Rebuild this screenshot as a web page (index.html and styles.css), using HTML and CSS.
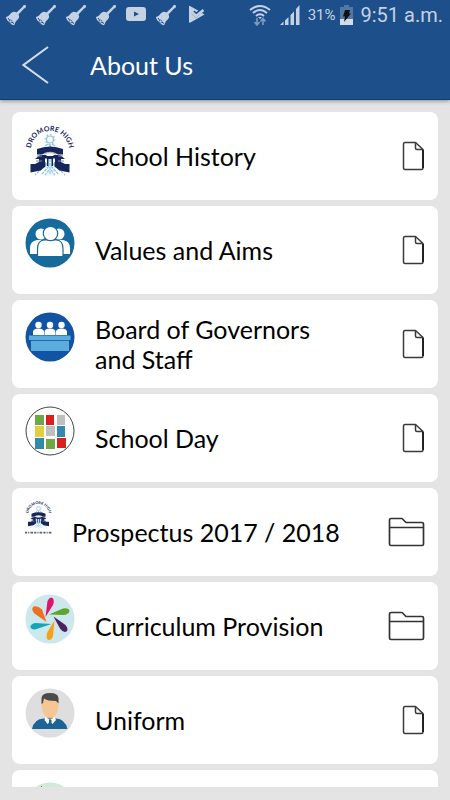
FILE: index.html
```html
<!DOCTYPE html>
<html lang="en">
<head>
    <meta charset="UTF-8">
    <meta name="viewport" content="width=device-width, initial-scale=1.0">
    <title>About Us</title>
    <link rel="stylesheet" href="styles.css">
</head>
<body>
    <!-- Shared icons -->
    <svg class="sprites" aria-hidden="true">
        <symbol id="bell" viewBox="0 0 22 22">
            <g fill="#c5d2e3">
                <path d="M11 9 19 1.500 20.500 3 13 11z"/>
                <path d="M17.500 2 20 .8 21.200 2 20 4.500z"/>
                <path d="M1 13C5 12 5 9 8 8 11 7 15 11 14 13.500 13 16 11 16 9.500 20.500Q8.500 22 6 20 1 16 1 13z"/>
            </g>
            <path d="M3 14Q5 18 9 19.500" fill="none" stroke="#1d4f8b" stroke-width="1"/>
            <circle cx="5.500" cy="17.500" r="1.500" fill="#c5d2e3" stroke="#1d4f8b" stroke-width=".7"/>
        </symbol>
        <symbol id="crest" viewBox="0 0 50 52">
            <path d="M20 34h10v18H20z" fill="#edf7fd"/>
            <g fill="none" stroke="#8cc4e6">
                <circle cx="25" cy="15.500" r="3.500" stroke-width="1.200"/>
                <circle cx="25" cy="15.500" r="4.800" stroke-width="1.200" stroke-dasharray="1.500 2.200"/>
                <path d="M25 20v5M20 22l3-2M30 22l-3-2M19 24h12" stroke-width="1.500"/>
                <path d="M25 35v16M23 39 10 51M27 39 40 51M24 42l-8 9M26 42l8 9M24 46l-4 5M26 46l4 5" stroke-width="1.200" stroke-dasharray="3 1"/>
            </g>
            <g fill="#16265a">
                <path d="M12 25Q25 20 38 25V30.500H33Q25 26 17 30.500H12z"/>
                <path d="M15 31h7l-2 2v7H10l4-2v-3h-4zM35 31h-7l2 2v7h10l-4-2v-3h4z"/>
                <path d="M20 32h10v2.500H28V42h-1.500v-7h-3v7H22v-7.500h-2z"/>
                <path d="M5.500 40h11l4-2v4.500l-5 4-10 2zM44.500 40H33.500l-4-2v4.500l5 4 10 2z"/>
            </g>
            <path d="M12 32h5M33 32h5M11 37h6M33 37h6" stroke="#8290ad" stroke-width="1"/>
            <path d="M19 30Q25 27 31 30" fill="none" stroke="#b4bccb" stroke-width="1.500"/>
        </symbol>
        <symbol id="page" viewBox="0 0 23 30">
            <g fill="none" stroke="#3a3a3a" stroke-width="1.500" stroke-linejoin="round">
                <path d="M3 1.500H13.500L21 8.500V27Q21 28.500 19.500 28.500H3Q1.500 28.500 1.500 27V3Q1.500 1.500 3 1.500z"/>
                <path d="M13.500 1.500V7Q13.500 8.500 15 8.500H21"/>
            </g>
            <path d="M21 9V27" stroke="#222" stroke-width="2"/>
        </symbol>
        <symbol id="folder" viewBox="0 0 37 30">
            <path d="M3 1.500H14L18 5.500H34Q35.500 5.500 35.500 7V27Q35.500 28.500 34 28.500H3Q1.500 28.500 1.500 27V3Q1.500 1.500 3 1.500zM1.500 10.500H35.500" fill="none" stroke="#333" stroke-width="1.700" stroke-linejoin="round"/>
        </symbol>
    </svg>

    <header class="app-header">
        <div class="status-bar">
            <div class="notifications">
                <svg class="notice"><use href="#bell"/></svg>
                <svg class="notice"><use href="#bell"/></svg>
                <svg class="notice"><use href="#bell"/></svg>
                <svg class="notice"><use href="#bell"/></svg>
                <svg class="notice" viewBox="0 0 22 22">
                    <rect x="1" y="3" width="20" height="14" rx="3" fill="#c5d2e3"/>
                    <path d="M9 7.500v5l5-2.500z" fill="#1d4f8b"/>
                </svg>
                <svg class="notice"><use href="#bell"/></svg>
                <svg class="notice" viewBox="0 0 22 22">
                    <path d="M4 2.500Q4 1.500 5 2L14 7 19.500 10.500 5.500 18.500Q4 19 4 18z" fill="#c5d2e3"/>
                    <path d="M8 8 11 11 20 3.500" fill="none" stroke="#1d4f8b" stroke-width="4"/>
                    <path d="M7 8 11 12 18.500 6" fill="none" stroke="#c5d2e3" stroke-width="2.500"/>
                </svg>
            </div>
            <div class="device">
                <svg class="wifi" viewBox="0 0 22 24">
                    <g fill="none" stroke="#c5d2e3" stroke-width="2">
                        <path d="M1 7Q11-1 21 7M4 10Q11 4 18 10M7 13Q11 9.500 15 13"/>
                    </g>
                    <path d="M9 14h4l-2 2z" fill="#c5d2e3"/>
                    <path d="M8 15v7M5.500 19 8 22l2.500-3M14 22v-6M11.500 18.500 14 15.500l2.500 3" fill="none" stroke="#7f9cc0" stroke-width="1.600"/>
                </svg>
                <svg class="signal" viewBox="0 0 22 22">
                    <path d="M1 21 4.500 17.500V21zM6 16.500 9.500 13V21H6zM11.500 11 15 7.500V21h-3.500zM17 5 20.500 1V21H17z" fill="#c5d2e3"/>
                </svg>
                <span class="charge">31%</span>
                <svg class="battery" viewBox="0 0 13 20">
                    <path d="M4 0h5v2h4v18H0V2h4z" fill="#5078a8"/>
                    <path d="M0 14h13v6H0z" fill="#d3dce8"/>
                    <path d="M5 5h5L9 8.500h2L4 17l1-5.500H3z" fill="#111"/>
                </svg>
                <span class="clock">9:51 a.m.</span>
            </div>
        </div>
        <div class="title-bar">
            <button class="back" type="button" aria-label="Back">
                <svg viewBox="0 0 28 40"><path d="M26 2 1.500 20 26 38" fill="none" stroke="#d5dfeb" stroke-width="2"/></svg>
            </button>
            <h1>About Us</h1>
        </div>
    </header>

    <main class="menu">
        <a class="card" href="#history">
            <svg class="picture" viewBox="0 0 50 50">
                <use href="#crest" width="50" height="52"/>
                <path id="arc" d="M6 26A19 19 0 0 1 44 26" fill="none"/>
                <text class="crest-name" text-anchor="middle"><textPath href="#arc" startOffset="50%">DROMORE HIGH</textPath></text>
            </svg>
            <span class="label">School History</span>
            <svg class="page"><use href="#page"/></svg>
        </a>
        <a class="card" href="#values">
            <svg class="picture" viewBox="0 0 50 50">
                <circle cx="25" cy="25" r="24.500" fill="#176b9c"/>
                <g fill="#fff">
                    <circle cx="16" cy="16" r="5.500"/>
                    <circle cx="34" cy="16" r="5.500"/>
                    <path d="M5 36V30Q5 23 12 22H38Q45 23 45 30V36z"/>
                </g>
                <g fill="#fff" stroke="#176b9c" stroke-width="1.200">
                    <path d="M12.500 38.500V31Q12.500 22 20 22H31Q38 22 38 31V38.500z"/>
                    <circle cx="25.500" cy="15.500" r="7.200"/>
                </g>
            </svg>
            <span class="label">Values and Aims</span>
            <svg class="page"><use href="#page"/></svg>
        </a>
        <a class="card" href="#governors">
            <svg class="picture" viewBox="0 0 50 50">
                <circle cx="25" cy="25" r="24.500" fill="#1254a3"/>
                <g fill="#fff">
                    <circle cx="13.500" cy="13" r="3.200"/>
                    <circle cx="25" cy="13" r="3.200"/>
                    <circle cx="36.500" cy="13" r="3.200"/>
                    <path d="M8 23V20Q8 16.500 13.500 16.500T19 20V23zM19.500 23V20Q19.500 16.500 25 16.500T30.500 20V23zM31 23V20Q31 16.500 36.500 16.500T42 20V23z"/>
                </g>
                <path d="M4 23.500H45.500V28H4zM6 28.800H44V39H6z" fill="#5badde"/>
            </svg>
            <span class="label">Board of Governors and Staff</span>
            <svg class="page"><use href="#page"/></svg>
        </a>
        <a class="card" href="#day">
            <svg class="picture" viewBox="0 0 50 50">
                <circle cx="25" cy="25" r="24" fill="#fff" stroke="#444"/>
                <path d="M10 9h9v10h-9zM21 33h9v10h-9z" fill="#6fa744"/>
                <path d="M21 9h8v10h-8zM32 32h9v10h-9z" fill="#d9201f"/>
                <path d="M32 9h8v10h-8zM21 20h9v10h-9z" fill="#bfbfbf"/>
                <path d="M10 20h9v11h-9z" fill="#e2cf3e"/>
                <path d="M32 20h8v11h-8zM10 32h9v11h-9z" fill="#318aaa"/>
            </svg>
            <span class="label">School Day</span>
            <svg class="page"><use href="#page"/></svg>
        </a>
        <a class="card" href="#prospectus">
            <svg class="picture small" viewBox="0 0 50 66">
                <use href="#crest" width="50" height="52"/>
                <text class="crest-name" text-anchor="middle"><textPath href="#arc" startOffset="50%">DROMORE HIGH</textPath></text>
                <path d="M0 60H50" stroke="#58637f" stroke-width="3" stroke-dasharray="4 2 2 2 5 2"/>
            </svg>
            <span class="label wide">Prospectus 2017 / 2018</span>
            <svg class="folder"><use href="#folder"/></svg>
        </a>
        <a class="card" href="#curriculum">
            <svg class="picture" viewBox="0 0 50 50">
                <circle cx="25" cy="25" r="24.500" fill="#cce8ec"/>
                <path d="M20.500 23 22.500 7Q25 1.500 28 4.500 29.500 7 28 11z" fill="#db146f"/>
                <path d="M24 20.500 38 14.500Q44 13.500 44.500 17 44 20 39 21z" fill="#5ca52e"/>
                <path d="M28.500 22.500 40.500 31Q44 35.500 41.500 37.500 38 39 35 34.500z" fill="#4c2161"/>
                <path d="M29.500 26.500 28 42Q26 47.500 22.500 45.500 20.500 43 22.500 38z" fill="#f6a01b"/>
                <path d="M26.500 30 10 29Q5 30 5.500 33.500 7.500 37 13 34.500z" fill="#18a4b4"/>
                <path d="M21.500 28 17 15.500Q13 11.500 8.500 12.500 5.500 15 9.500 19.500z" fill="#ed7022"/>
            </svg>
            <span class="label">Curriculum Provision</span>
            <svg class="folder"><use href="#folder"/></svg>
        </a>
        <a class="card" href="#uniform">
            <svg class="picture" viewBox="0 0 50 50">
                <circle cx="25" cy="25" r="24.500" fill="#dedede"/>
                <path d="M22 25h6.500v7H22z" fill="#e8b885"/>
                <path d="M7 41Q9 31 19 30.500H31Q40 31 42.500 41z" fill="#1b6496"/>
                <path d="M20.500 29 25 32 29.500 29 31 32 27.500 36 25 33.500 22.500 36 19.500 32z" fill="#fff"/>
                <path d="M24 32h2.500v4H24z" fill="#1b6496"/>
                <path d="M17 10H33.500V18Q33 27 28 29H22Q17.500 27 16.500 18z" fill="#f6c795"/>
                <path d="M16.500 16V10Q17 5 25 5T33.500 10V15.500L31 13Q22 13 19 10.500L18 15z" fill="#4b4b4a"/>
            </svg>
            <span class="label">Uniform</span>
            <svg class="page"><use href="#page"/></svg>
        </a>
        <a class="card" href="#more" aria-label="More">
            <svg class="picture" viewBox="0 0 50 50">
                <circle cx="25" cy="25" r="24.500" fill="#d3e9d8"/>
                <path d="M16 4 20 8" stroke="#777" stroke-width="1"/>
            </svg>
        </a>
    </main>
</body>
</html>
```

FILE: styles.css
```css
* {
    margin: 0;
    padding: 0;
    box-sizing: border-box;
}
body {
    display: flex;
    flex-direction: column;
    height: 100vh;
    padding-bottom: 13px;
    background-color: #e4e4e4;
    font-family: Lato, sans-serif;
}
.sprites {
    display: none;
}
.app-header {
    flex: none;
    background-color: #1d4f8b;
    border-bottom: 1px solid #0b3c7c;
    box-shadow: 0 1px 4px rgba(0,0,0,0.4);
    color: white;
    z-index: 1;
}
.status-bar {
    display: flex;
    justify-content: space-between;
    align-items: center;
    height: 30px;
    padding: 0 7px 0 5px;
    font-family: Roboto, sans-serif;
    color: #c5d2e3;
}
.notifications {
    display: flex;
    gap: 8px;
}
.notice {
    width: 22px;
    height: 22px;
}
.device {
    display: flex;
    align-items: center;
}
.wifi {
    width: 22px;
    height: 24px;
    margin-right: 8px;
}
.signal {
    width: 22px;
    height: 22px;
    margin-right: 7px;
}
.charge {
    font-size: 15px;
    margin-right: 4px;
}
.battery {
    width: 13px;
    height: 20px;
    margin-right: 8px;
}
.clock {
    font-size: 20px;
}
.title-bar {
    display: flex;
    align-items: center;
    gap: 40px;
    height: 69px;
    padding: 0 22px;
}
.back {
    width: 28px;
    height: 40px;
    background: none;
    border: none;
    cursor: pointer;
}
.back svg {
    display: block;
}
h1 {
    font-size: 25px;
    font-weight: normal;
    line-height: 30px;
}
.menu {
    flex: 1;
    display: flex;
    flex-direction: column;
    gap: 6px;
    min-height: 0;
    padding: 12px 12px 0;
    overflow-y: auto;
    scrollbar-width: none;
}
.card {
    flex: none;
    display: flex;
    align-items: center;
    gap: 20px;
    min-height: 88px;
    padding: 0 13px;
    background-color: white;
    border-radius: 8px;
    color: #000;
    text-decoration: none;
}
.picture {
    flex: none;
    align-self: flex-start;
    width: 50px;
    height: 50px;
    margin-top: 12px;
    overflow: visible;
}
.picture.small {
    width: 27px;
    height: 36px;
}
.crest-name {
    font-size: 7px;
    font-weight: bold;
    fill: #16265a;
}
.label {
    flex: 1;
    max-width: 240px;
    font-size: 25px;
    line-height: 30px;
}
.label.wide {
    max-width: none;
}
.page {
    flex: none;
    width: 23px;
    height: 30px;
    margin-left: auto;
}
.folder {
    flex: none;
    width: 37px;
    height: 30px;
    margin-left: auto;
}
```
